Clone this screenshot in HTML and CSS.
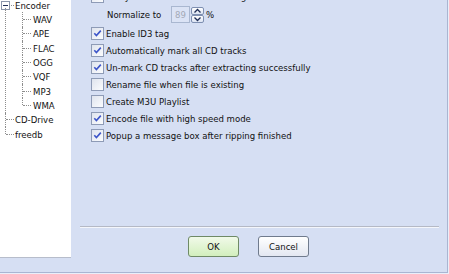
FILE: index.html
```html
<!DOCTYPE html>
<html>
<head>
<meta charset="utf-8">
<link rel="stylesheet" href="styles.css">
</head>
<body>
<div class="window">
  <div class="tree">
    <ul class="root">
      <li>
        <div class="row">
          <span class="toggle"><svg width="9" height="9" viewBox="0 0 9 9"><rect x="0.5" y="0.5" width="8" height="8" fill="#fff" stroke="#8c97ab"/><path d="M2 4.5H7" stroke="#1f2d55" stroke-width="1"/></svg></span>
          <span class="hconn short"></span>
          <span class="label">Encoder</span>
        </div>
        <ul class="children">
          <li><div class="row"><span class="hconn"></span><span class="label">WAV</span></div></li>
          <li><div class="row"><span class="hconn"></span><span class="label">APE</span></div></li>
          <li><div class="row"><span class="hconn"></span><span class="label">FLAC</span></div></li>
          <li><div class="row"><span class="hconn"></span><span class="label">OGG</span></div></li>
          <li><div class="row"><span class="hconn"></span><span class="label">VQF</span></div></li>
          <li><div class="row"><span class="hconn"></span><span class="label">MP3</span></div></li>
          <li><div class="row"><span class="hconn"></span><span class="label">WMA</span></div></li>
        </ul>
      </li>
      <li><div class="row"><span class="hconn"></span><span class="label">CD-Drive</span></div></li>
      <li><div class="row"><span class="hconn"></span><span class="label">freedb</span></div></li>
    </ul>
  </div>
  <div class="main">
    <div class="options">
      <label class="opt"><span class="cb"></span><span>Analyze volume before encoding</span></label>
      <div class="norm">
        <span class="norm-label">Normalize to</span>
        <span class="num">89</span>
        <span class="spin">
          <span class="sbtn"><svg width="11" height="6" viewBox="0 0 11 6"><path d="M2.5 4.5L5.5 1.5L8.5 4.5" fill="none" stroke="#1d2c55" stroke-width="1.3"/></svg></span>
          <span class="sbtn"><svg width="11" height="6" viewBox="0 0 11 6"><path d="M2.5 1.5L5.5 4.5L8.5 1.5" fill="none" stroke="#1d2c55" stroke-width="1.3"/></svg></span>
        </span>
        <span class="pct">%</span>
      </div>
      <label class="opt"><span class="cb on"><svg width="11" height="11" viewBox="0 0 11 11"><path d="M2.3 5.3L4.4 7.6L8.8 2.6" fill="none" stroke="#3d55c9" stroke-width="1.6"/></svg></span><span>Enable ID3 tag</span></label>
      <label class="opt"><span class="cb on"><svg width="11" height="11" viewBox="0 0 11 11"><path d="M2.3 5.3L4.4 7.6L8.8 2.6" fill="none" stroke="#3d55c9" stroke-width="1.6"/></svg></span><span>Automatically mark all CD tracks</span></label>
      <label class="opt"><span class="cb on"><svg width="11" height="11" viewBox="0 0 11 11"><path d="M2.3 5.3L4.4 7.6L8.8 2.6" fill="none" stroke="#3d55c9" stroke-width="1.6"/></svg></span><span>Un-mark CD tracks after extracting successfully</span></label>
      <label class="opt"><span class="cb"></span><span>Rename file when file is existing</span></label>
      <label class="opt"><span class="cb"></span><span>Create M3U Playlist</span></label>
      <label class="opt"><span class="cb on"><svg width="11" height="11" viewBox="0 0 11 11"><path d="M2.3 5.3L4.4 7.6L8.8 2.6" fill="none" stroke="#3d55c9" stroke-width="1.6"/></svg></span><span>Encode file with high speed mode</span></label>
      <label class="opt"><span class="cb on"><svg width="11" height="11" viewBox="0 0 11 11"><path d="M2.3 5.3L4.4 7.6L8.8 2.6" fill="none" stroke="#3d55c9" stroke-width="1.6"/></svg></span><span>Popup a message box after ripping finished</span></label>
    </div>
    <div class="separator"></div>
    <div class="buttons">
      <button class="btn ok">OK</button>
      <button class="btn cancel">Cancel</button>
    </div>
  </div>
</div>
</body>
</html>
```

FILE: styles.css
```css
html, body {
  margin: 0;
  padding: 0;
}
body {
  width: 449px;
  height: 274px;
  overflow: hidden;
  background: #e9eef9;
  font-family: "DejaVu Sans Condensed", "DejaVu Sans", sans-serif;
  font-size: 9.5px;
  color: #111;
}
.window {
  display: flex;
  width: 447px;
  height: 272px;
  background: #d6dff3;
  border-right: 1px solid #a9b5d2;
  border-bottom: 1px solid #a9b5d2;
  overflow: hidden;
}
.tree {
  width: 71px;
  height: 257px;
  flex: none;
  background: #fff;
  border-bottom: 1px solid #b7bdcb;
  overflow: hidden;
}
.tree ul {
  list-style: none;
  margin: 0;
  padding: 0;
}
.root {
  margin-top: -2px !important;
}
.tree li {
  position: relative;
}
.row {
  display: flex;
  align-items: center;
  height: 14.33px;
  white-space: nowrap;
}
.root > li::before {
  content: "";
  position: absolute;
  left: 5px;
  top: 0;
  bottom: 0;
  border-left: 1px dotted #8d8d8d;
}
.root > li:first-child::before {
  top: 10px;
}
.root > li:last-child::before {
  bottom: auto;
  height: 7px;
}
.children > li::before {
  content: "";
  position: absolute;
  left: 22px;
  top: 0;
  bottom: 0;
  border-left: 1px dotted #8d8d8d;
}
.children > li:last-child::before {
  bottom: auto;
  height: 7px;
}
.toggle {
  display: flex;
  margin-left: 1px;
  width: 9px;
  height: 9px;
}
.hconn {
  display: block;
  width: 8px;
  margin-left: 6px;
  border-top: 1px dotted #8d8d8d;
}
.hconn.short {
  width: 3px;
  margin-left: 1px;
}
.row .label {
  margin-left: 1px;
}
.children .hconn {
  margin-left: 23px;
}
.children .label {
  margin-left: 2px;
}
.main {
  flex: 1;
  display: flex;
  flex-direction: column;
}
.options {
  margin-top: -12.5px;
  padding-left: 20px;
  display: flex;
  flex-direction: column;
}
.opt {
  display: flex;
  align-items: center;
  height: 17px;
  white-space: nowrap;
}
.cb {
  width: 11px;
  height: 11px;
  border: 1px solid #8e9bb6;
  background: linear-gradient(135deg, #dfe4ee, #fbfcfe);
  display: flex;
  align-items: center;
  justify-content: center;
  margin-right: 2px;
  flex: none;
}
.norm {
  display: flex;
  align-items: center;
  height: 20px;
  padding-left: 16px;
}
.norm-label {
  width: 64px;
}
.num {
  width: 17px;
  height: 15px;
  border: 1px solid #a9b7d0;
  background: #dbe3f5;
  color: #a3a9b6;
  line-height: 15px;
  padding-left: 0;
  text-indent: 3px;
}
.spin {
  display: flex;
  flex-direction: column;
  margin-left: 1px;
}
.sbtn {
  width: 11px;
  height: 6px;
  border: 1px solid #7e8fb1;
  border-radius: 2px;
  background: linear-gradient(#ffffff, #dce4f3);
  display: flex;
}
.pct {
  margin-left: 2px;
}
.separator {
  margin-top: auto;
  margin-left: 9px;
  margin-right: 8px;
  height: 1px;
  background: #b5b9c5;
  border-bottom: 1px solid #f4f6fb;
}
.buttons {
  display: flex;
  padding: 8px 0 15px 117px;
}
.btn {
  width: 51px;
  height: 21px;
  margin: 0;
  padding: 0;
  border: 1px solid #707b8d;
  border-radius: 3px;
  font-family: inherit;
  font-size: 9.5px;
  color: #111;
}
.ok {
  background: linear-gradient(#f1fae9, #d2efbd);
  border-color: #6f8a66;
}
.cancel {
  margin-left: 19px;
  background: linear-gradient(#ffffff, #e3e7f1);
}
```
